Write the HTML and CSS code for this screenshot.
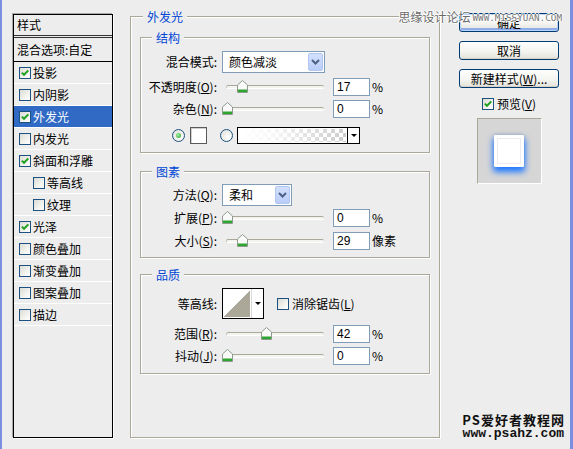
FILE: index.html
```html
<!DOCTYPE html>
<html lang="zh-CN">
<head>
<meta charset="utf-8">
<title>图层样式</title>
<link rel="stylesheet" href="styles.css">
</head>
<body>
<div class="window">
  <aside class="styles-list">
    <div class="list-head">样式</div>
    <div class="list-blend">混合选项:自定</div>
    <div class="item"><span class="cb on"><svg viewBox="0 0 10 10" width="10" height="10"><path d="M1.8 4.6 L4 6.8 L8.3 2.4" fill="none" stroke="#21a121" stroke-width="2"/></svg></span><span>投影</span></div>
    <div class="item"><span class="cb"></span><span>内阴影</span></div>
    <div class="item selected"><span class="cb on"><svg viewBox="0 0 10 10" width="10" height="10"><path d="M1.8 4.6 L4 6.8 L8.3 2.4" fill="none" stroke="#21a121" stroke-width="2"/></svg></span><span>外发光</span></div>
    <div class="item"><span class="cb"></span><span>内发光</span></div>
    <div class="item"><span class="cb on"><svg viewBox="0 0 10 10" width="10" height="10"><path d="M1.8 4.6 L4 6.8 L8.3 2.4" fill="none" stroke="#21a121" stroke-width="2"/></svg></span><span>斜面和浮雕</span></div>
    <div class="item sub"><span class="cb"></span><span>等高线</span></div>
    <div class="item sub"><span class="cb"></span><span>纹理</span></div>
    <div class="item"><span class="cb on"><svg viewBox="0 0 10 10" width="10" height="10"><path d="M1.8 4.6 L4 6.8 L8.3 2.4" fill="none" stroke="#21a121" stroke-width="2"/></svg></span><span>光泽</span></div>
    <div class="item"><span class="cb"></span><span>颜色叠加</span></div>
    <div class="item"><span class="cb"></span><span>渐变叠加</span></div>
    <div class="item"><span class="cb"></span><span>图案叠加</span></div>
    <div class="item"><span class="cb"></span><span>描边</span></div>
  </aside>

  <fieldset class="main">
    <legend>外发光</legend>

    <fieldset class="group g-struct">
      <legend>结构</legend>
      <div class="row r-blend">
        <span class="lbl">混合模式:</span>
        <div class="select s-blend"><span class="val">颜色减淡</span><span class="arrow"><svg viewBox="0 0 9 6" width="9" height="6"><path d="M1 1 L4.5 4.5 L8 1" fill="none" stroke="#4d6185" stroke-width="2"/></svg></span></div>
      </div>
      <div class="row r-opacity">
        <span class="lbl">不透明度(<u>O</u>):</span>
        <div class="slider"><div class="track"></div><span class="thumb" style="left:15px"><svg viewBox="0 0 11 13" width="11" height="13"><path d="M5.5 0.5 L10.5 5 L10.5 12.5 L0.5 12.5 L0.5 5 Z" fill="#fafafa" stroke="#8d9a8d"/><rect x="1" y="9.5" width="9" height="2.5" fill="#2ea52e"/></svg></span></div>
        <span class="num">17</span><span class="unit">%</span>
      </div>
      <div class="row r-noise">
        <span class="lbl">杂色(<u>N</u>):</span>
        <div class="slider"><div class="track"></div><span class="thumb" style="left:0px"><svg viewBox="0 0 11 13" width="11" height="13"><path d="M5.5 0.5 L10.5 5 L10.5 12.5 L0.5 12.5 L0.5 5 Z" fill="#fafafa" stroke="#8d9a8d"/><rect x="1" y="9.5" width="9" height="2.5" fill="#2ea52e"/></svg></span></div>
        <span class="num">0</span><span class="unit">%</span>
      </div>
      <div class="row r-colors">
        <span class="radio on"></span>
        <span class="swatch"></span>
        <span class="radio"></span>
        <div class="gradient"><span class="grad"></span><span class="drop"><i class="tri"></i></span></div>
      </div>
    </fieldset>

    <fieldset class="group g-elements">
      <legend>图素</legend>
      <div class="row r-method">
        <span class="lbl">方法(<u>Q</u>):</span>
        <div class="select s-method"><span class="val">柔和</span><span class="arrow"><svg viewBox="0 0 9 6" width="9" height="6"><path d="M1 1 L4.5 4.5 L8 1" fill="none" stroke="#4d6185" stroke-width="2"/></svg></span></div>
      </div>
      <div class="row r-spread">
        <span class="lbl">扩展(<u>P</u>):</span>
        <div class="slider"><div class="track"></div><span class="thumb" style="left:0px"><svg viewBox="0 0 11 13" width="11" height="13"><path d="M5.5 0.5 L10.5 5 L10.5 12.5 L0.5 12.5 L0.5 5 Z" fill="#fafafa" stroke="#8d9a8d"/><rect x="1" y="9.5" width="9" height="2.5" fill="#2ea52e"/></svg></span></div>
        <span class="num">0</span><span class="unit">%</span>
      </div>
      <div class="row r-size">
        <span class="lbl">大小(<u>S</u>):</span>
        <div class="slider"><div class="track"></div><span class="thumb" style="left:15px"><svg viewBox="0 0 11 13" width="11" height="13"><path d="M5.5 0.5 L10.5 5 L10.5 12.5 L0.5 12.5 L0.5 5 Z" fill="#fafafa" stroke="#8d9a8d"/><rect x="1" y="9.5" width="9" height="2.5" fill="#2ea52e"/></svg></span></div>
        <span class="num">29</span><span class="unit">像素</span>
      </div>
    </fieldset>

    <fieldset class="group g-quality">
      <legend>品质</legend>
      <div class="row r-contour">
        <span class="lbl">等高线:</span>
        <div class="contour"><span class="curve"></span><span class="drop"><i class="tri"></i></span></div>
        <span class="check"><span class="cb"></span><span class="check-text">消除锯齿(<u>L</u>)</span></span>
      </div>
      <div class="row r-range">
        <span class="lbl">范围(<u>R</u>):</span>
        <div class="slider"><div class="track"></div><span class="thumb" style="left:39px"><svg viewBox="0 0 11 13" width="11" height="13"><path d="M5.5 0.5 L10.5 5 L10.5 12.5 L0.5 12.5 L0.5 5 Z" fill="#fafafa" stroke="#8d9a8d"/><rect x="1" y="9.5" width="9" height="2.5" fill="#2ea52e"/></svg></span></div>
        <span class="num">42</span><span class="unit">%</span>
      </div>
      <div class="row r-jitter">
        <span class="lbl">抖动(<u>J</u>):</span>
        <div class="slider"><div class="track"></div><span class="thumb" style="left:0px"><svg viewBox="0 0 11 13" width="11" height="13"><path d="M5.5 0.5 L10.5 5 L10.5 12.5 L0.5 12.5 L0.5 5 Z" fill="#fafafa" stroke="#8d9a8d"/><rect x="1" y="9.5" width="9" height="2.5" fill="#2ea52e"/></svg></span></div>
        <span class="num">0</span><span class="unit">%</span>
      </div>
    </fieldset>
  </fieldset>

  <div class="side">
    <button class="btn default"><span>确定</span></button>
    <button class="btn"><span>取消</span></button>
    <button class="btn"><span>新建样式(<u>W</u>)...</span></button>
    <div class="preview-check"><span class="cb on"><svg viewBox="0 0 10 10" width="10" height="10"><path d="M1.8 4.6 L4 6.8 L8.3 2.4" fill="none" stroke="#21a121" stroke-width="2"/></svg></span><span class="check-text">预览(<u>V</u>)</span></div>
    <div class="preview"><span class="glow"></span></div>
  </div>

  <div class="wm-top">思缘设计论坛<span class="url">WWW.MISSYUAN.COM</span></div>
  <div class="wm-bottom"><div class="wm-name">PS爱好者教程网</div><div class="wm-url">www.psahz.com</div></div>
</div>
</body>
</html>
```
FILE: styles.css
```css
* { box-sizing: border-box; }
html, body { margin: 0; padding: 0; }
body {
  width: 573px;
  height: 449px;
  overflow: hidden;
  background: #ededed;
  color: #000;
  font-family: "Noto Sans CJK SC", "DejaVu Sans", sans-serif;
  font-size: 12px;
  line-height: 14px;
}
u { text-decoration: underline; text-underline-offset: 1px; }

.window {
  position: relative;
  display: flex;
  align-items: flex-start;
  width: 573px;
  height: 449px;
  background: #ededed;
  border-left: 2px solid #7b8fe0;
  border-right: 3px solid #7b8fe0;
}

/* ---------- left list ---------- */
.styles-list {
  margin: 14px 0 0 11px;
  width: 100px;
  height: 424px;
  flex: none;
  border: 1px solid #000;
  box-shadow: -1px -1px 0 #a7a6a0, 1px 1px 0 #fff;
  display: flex;
  flex-direction: column;
}
.list-head {
  height: 23px;
  line-height: 20px;
  padding-left: 3px;
  border-bottom: 3px double #333;
}
.list-blend {
  height: 24px;
  line-height: 23px;
  padding-left: 3px;
  border-bottom: 1px solid #000;
}
.item {
  height: 22px;
  display: flex;
  align-items: center;
  gap: 2px;
  padding-left: 5px;
  border-bottom: 1px solid #fff;
}
.item.sub { padding-left: 19px; }
.item.selected { background: #316ac5; color: #fff; }

.cb {
  width: 12px;
  height: 12px;
  flex: none;
  display: inline-flex;
  align-items: center;
  justify-content: center;
  border: 1px solid #1c5180;
  background: linear-gradient(135deg, #dcdcd5, #f6f6f3 70%, #fff);
}

/* ---------- main fieldset ---------- */
fieldset { min-width: 0; }
legend {
  padding: 2px 4px 0;
  line-height: 14px;
  color: #0046d5;
  background: #ededed;
}
.main {
  flex: none;
  margin: 8px 0 0 17px;
  width: 310px;
  height: 430px;
  padding: 0;
  border: 1px solid #aca899;
  box-shadow: 1px 1px 0 #fff, inset 1px 1px 0 #fff;
}
.main > legend { margin-left: 12px; }

.group {
  margin: 5px 9px 0;
  padding: 6px 0 8px;
  border: 1px solid #aca899;
  box-shadow: 1px 1px 0 #fff, inset 1px 1px 0 #fff;
}
.group > legend { margin-left: 11px; }
.g-elements { margin-top: 10px; padding: 5px 0 7px; }
.g-quality { margin-top: 8px; padding: 6px 0 8px; }

.row { display: flex; align-items: center; }
.lbl {
  width: 76px;
  margin-right: 5px;
  text-align: right;
  white-space: nowrap;
  flex: none;
}
.r-opacity { margin-top: 5px; }
.r-noise { margin-top: 4px; }
.r-colors { margin-top: 9px; padding-left: 31px; }
.r-spread { margin-top: 3px; }
.r-size { margin-top: 5px; }
.r-range { margin-top: 6px; }
.r-jitter { margin-top: 4px; }

/* select */
.select {
  display: flex;
  height: 22px;
  padding: 1px;
  border: 1px solid #7f9db9;
  background: #fff;
}
.s-blend { width: 103px; }
.s-method { width: 70px; }
.select .val { flex: 1; padding-left: 5px; line-height: 18px; }
.select .arrow {
  width: 15px;
  display: flex;
  align-items: center;
  justify-content: center;
  border-radius: 2px;
  background: linear-gradient(#d3e0fd, #b9cdf8);
  border: 1px solid #b3c6f2;
}

/* slider */
.slider {
  position: relative;
  width: 104px;
  height: 18px;
  flex: none;
  display: flex;
  align-items: center;
}
.track {
  margin-left: 4px;
  width: 98px;
  height: 4px;
  border-radius: 2px;
  border-top: 1px solid #aca899;
  border-left: 1px solid #c6c4ba;
  background: #f3f3f0;
  border-bottom: 1px solid #fff;
}
.thumb {
  position: absolute;
  top: 2px;
  width: 11px;
  height: 13px;
  display: block;
}
.thumb svg { display: block; }

.num {
  margin-left: 7px;
  width: 37px;
  height: 18px;
  flex: none;
  border: 1px solid #7f9db9;
  background: #fff;
  padding-left: 3px;
  line-height: 16px;
  font-family: "Liberation Sans", sans-serif;
}
.unit { margin-left: 2px; }

/* colors row */
.radio {
  width: 13px;
  height: 13px;
  flex: none;
  border-radius: 50%;
  border: 1px solid #1c5180;
  background: radial-gradient(circle at 65% 65%, #fff, #dcdcd5);
  display: flex;
  align-items: center;
  justify-content: center;
}
.radio.on::after {
  content: "";
  width: 5px;
  height: 5px;
  border-radius: 50%;
  background: radial-gradient(circle at 40% 40%, #a8eea8, #21a121);
}
.swatch {
  margin-left: 5px;
  width: 17px;
  height: 17px;
  flex: none;
  border: 1px solid #5a5a5a;
  box-shadow: inset 1px 1px 0 #d0d0d0;
  background: #fff;
}
.r-colors .radio + .swatch + .radio { margin-left: 13px; }
.gradient {
  margin-left: 4px;
  width: 123px;
  height: 17px;
  display: flex;
  border: 1px solid #000;
  background: #fff;
}
.gradient .grad {
  flex: 1;
  border: 1px solid #fff;
  background:
    linear-gradient(to right, #fff 0%, rgba(255,255,255,0.85) 30%, rgba(255,255,255,0) 100%),
    repeating-conic-gradient(#cccccc 0 25%, #fff 0 50%) 0 0 / 8px 8px;
}
.drop {
  width: 12px;
  flex: none;
  display: flex;
  align-items: center;
  justify-content: center;
  background: #fff;
  border-left: 1px solid #000;
}
.tri {
  width: 0;
  height: 0;
  border-left: 3px solid transparent;
  border-right: 3px solid transparent;
  border-top: 3px solid #000;
}

/* contour */
.contour {
  width: 42px;
  height: 31px;
  flex: none;
  display: flex;
  border: 1px solid #000;
  background: #fff;
}
.contour .curve {
  width: 30px;
  border: 1px solid #fff;
  background: linear-gradient(to top left, #aca899 50%, #fff 50%);
}
.contour .drop { border-left: 1px solid #d8d8d8; }
.check {
  margin-left: 13px;
  display: flex;
  align-items: center;
  gap: 3px;
}
.check-text { white-space: nowrap; }

/* ---------- side ---------- */
.side {
  flex: none;
  margin: 13px 0 0 19px;
  width: 100px;
  display: flex;
  flex-direction: column;
  align-items: center;
}
.btn {
  width: 100px;
  height: 19px;
  margin: 0 0 9px;
  padding: 0;
  border: 1px solid #003c74;
  border-radius: 3px;
  background: linear-gradient(#fefefd, #f4f4f1 55%, #e3e1d9);
  box-shadow: inset 0 -1px 0 #d6d0c5;
  font-family: "Noto Sans CJK SC", sans-serif;
  font-size: 12px;
  line-height: 14px;
  color: #000;
  display: flex;
  align-items: center;
  justify-content: center;
}
.btn.default {
  box-shadow: inset 0 0 0 1px #b9d0f6, inset 0 -2px 0 1px #8eaceb;
}
.preview-check {
  display: flex;
  align-items: center;
  gap: 3px;
  height: 13px;
}
.preview {
  margin-top: 8px;
  width: 65px;
  height: 66px;
  border: 1px solid;
  border-color: #aca899 #fff #fff #aca899;
  background: #d6d6d6;
  display: flex;
  align-items: center;
  justify-content: center;
}
.glow {
  width: 30px;
  height: 32px;
  border-radius: 2px;
  background: #fff;
  box-shadow: inset 0 0 0 3px #fff, inset 0 0 0 4px #ececec, 0 4px 6px 1px rgba(30,120,255,1), 0 -1px 3px rgba(0,0,0,0.12);
}

/* ---------- watermarks ---------- */
.wm-top {
  position: absolute;
  top: 9px;
  right: 8px;
  display: flex;
  align-items: center;
  color: #6a6a6a;
  font-size: 12px;
  line-height: 14px;
  text-shadow: 1px 0 #fff, -1px 0 #fff, 0 1px #fff, 0 -1px #fff;
  z-index: 2;
}
.wm-top .url {
  margin-left: 2px;
  margin-top: 2px;
  font-family: "DejaVu Sans Mono", monospace;
  font-size: 9.3px;
  color: #777;
}
.wm-bottom {
  position: absolute;
  right: 6px;
  bottom: 8px;
  text-align: right;
  font-weight: bold;
  color: #111;
  line-height: 14px;
}
.wm-name {
  font-size: 13px;
  letter-spacing: 1px;
  margin-right: -1px;
}
.wm-url {
  font-family: "Liberation Mono", monospace;
  font-size: 13px;
}
```
